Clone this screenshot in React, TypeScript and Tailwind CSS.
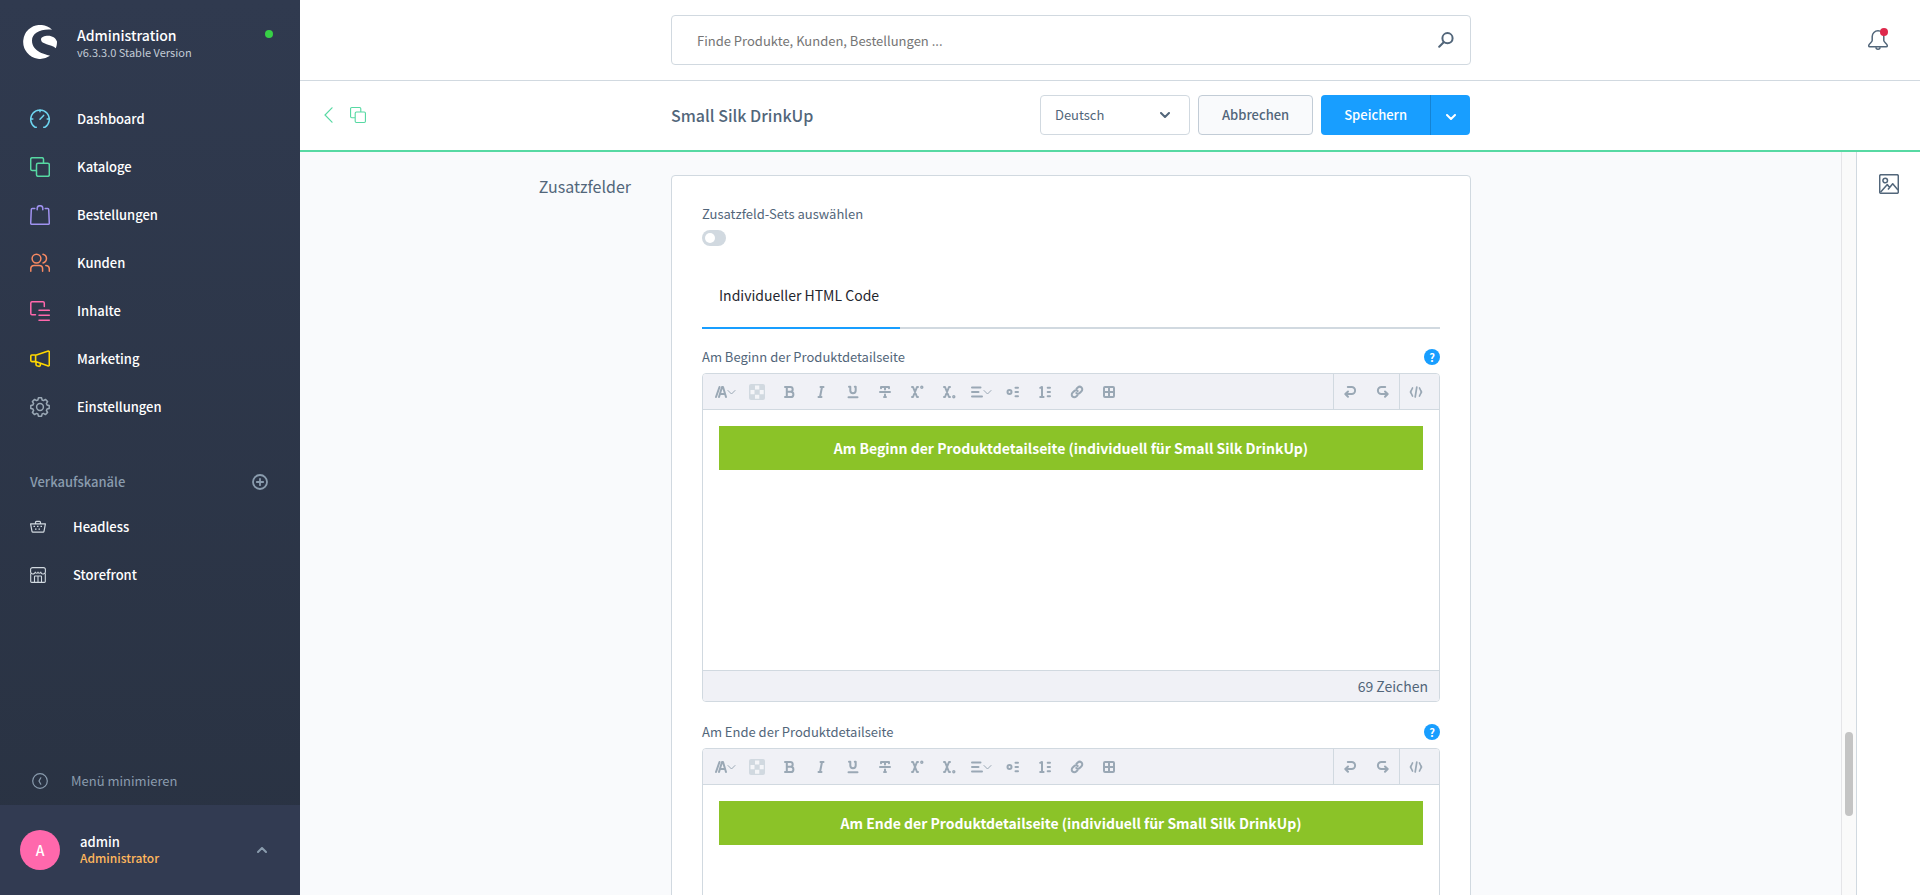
import { ReactNode, useState } from 'react';

const navItems = [
  { name: 'Dashboard', icon: <DashboardIcon /> },
  { name: 'Kataloge', icon: <CopyIcon className="size-5 text-[#57d9a3]" strokeWidth={1.5} /> },
  { name: 'Bestellungen', icon: <BagIcon /> },
  { name: 'Kunden', icon: <UsersIcon /> },
  { name: 'Inhalte', icon: <ContentIcon /> },
  { name: 'Marketing', icon: <MegaphoneIcon /> },
  { name: 'Einstellungen', icon: <GearIcon /> },
];

const channels = [
  { name: 'Headless', icon: <BasketIcon /> },
  { name: 'Storefront', icon: <StoreIcon /> },
];

const editors = [
  {
    id: 'start',
    label: 'Am Beginn der Produktdetailseite',
    text: 'Am Beginn der Produktdetailseite (individuell für Small Silk DrinkUp)',
  },
  {
    id: 'end',
    label: 'Am Ende der Produktdetailseite',
    text: 'Am Ende der Produktdetailseite (individuell für Small Silk DrinkUp)',
  },
];

function DashboardIcon() {
  return (
    <svg viewBox="0 0 20 20" className="size-5 text-[#6ed5f0]" fill="none" stroke="currentColor" strokeWidth="1.5" strokeLinecap="round">
      <path d="M6.3 18.3H5.2A9.3 9.3 0 1 1 14.8 18.3h-1.1M10 .8v2M.8 10h2M17.2 10h2M10 10.2l3.6-3.8" />
    </svg>
  );
}

function CopyIcon({ className, strokeWidth }: { className: string; strokeWidth: number }) {
  return (
    <svg viewBox="0 0 20 20" className={className} fill="none" stroke="currentColor" strokeWidth={strokeWidth}>
      <rect x="6.5" y="6.2" width="12.8" height="13.1" rx="1.5" />
      <path d="M6.2 13.5H2.2A1.5 1.5 0 0 1 .7 12V2.2A1.5 1.5 0 0 1 2.2.7H12a1.5 1.5 0 0 1 1.5 1.5v4" />
    </svg>
  );
}

function BagIcon() {
  return (
    <svg viewBox="0 0 20 20" className="size-5 text-[#a092f0]" fill="none" stroke="currentColor" strokeWidth="1.5" strokeLinecap="round" strokeLinejoin="round">
      <path d="M4.8 3.5H2.3a1 1 0 0 0-1 1L.7 18.1a1.1 1.1 0 0 0 1.1 1.2h16.4a1.1 1.1 0 0 0 1.1-1.2l-.6-13.6a1 1 0 0 0-1-1h-2.5M7.2 4.8V3.5a2.8 2.8 0 0 1 5.6 0v1.3" />
    </svg>
  );
}

function UsersIcon() {
  return (
    <svg viewBox="0 0 20 20" className="size-5 text-[#f88962]" fill="none" stroke="currentColor" strokeWidth="1.5" strokeLinecap="round">
      <circle cx="6.5" cy="5.6" r="4.4" />
      <path d="M.8 18.2v-2.4a3.3 3.3 0 0 1 3.3-3.3h5.2a3.3 3.3 0 0 1 3.3 3.3v2.4M13 1.3a4.4 4.4 0 0 1 0 8.6M15.8 12.6a3.6 3.6 0 0 1 3.5 3.6v2" />
    </svg>
  );
}

function ContentIcon() {
  return (
    <svg viewBox="0 0 20 20" className="size-5 text-[#ff68ac]" fill="none" stroke="currentColor" strokeWidth="1.5" strokeLinecap="round">
      <path d="M5.5 13.8H2A1.3 1.3 0 0 1 .8 12.5V2A1.3 1.3 0 0 1 2 .8h11A1.3 1.3 0 0 1 14.3 2v3.4M9 9.3h10.3M9 14.2h10.3M9 19.2h10.3" />
    </svg>
  );
}

function MegaphoneIcon() {
  return (
    <svg viewBox="0 0 20 20" className="size-5 text-[#ffd700]" fill="none" stroke="currentColor" strokeWidth="1.6" strokeLinejoin="round">
      <path d="M5.6 6.2 18.3 2.1a.8.8 0 0 1 1 .8v13.2a.8.8 0 0 1-1 .8L5.6 12.6M5.6 6H1.8a1 1 0 0 0-1 1v4.6a1 1 0 0 0 1 1h3.8V6M6 13v2.6a1.3 1.3 0 0 0 .9 1.2l1.8.5a1.3 1.3 0 0 0 1.6-1v-1.7" />
    </svg>
  );
}

function GearIcon() {
  return (
    <svg viewBox="0 0 20 20" className="size-5 text-[#9aa8b5]" fill="none" stroke="currentColor" strokeWidth="1.5" strokeLinejoin="round">
      <circle cx="10" cy="10" r="3.4" />
      <path d="M8.4.8h3.2l.5 2.2 1.4.6 1.9-1.2 2.2 2.2-1.2 1.9.6 1.4 2.2.5v3.2l-2.2.5-.6 1.4 1.2 1.9-2.2 2.2-1.9-1.2-1.4.6-.5 2.2H8.4L7.9 17l-1.4-.6-1.9 1.2-2.2-2.2 1.2-1.9L3 12.1l-2.2-.5V8.4L3 7.9l.6-1.4-1.2-1.9 2.2-2.2 1.9 1.2L7.9 3z" />
    </svg>
  );
}

function BasketIcon() {
  return (
    <svg viewBox="0 0 16 16" className="size-4 text-[#d1d9e0]" fill="none" stroke="currentColor" strokeWidth="1.2" strokeLinejoin="round">
      <path d="M.6 4.8h14.8L14 12.3a1 1 0 0 1-1 .8H3a1 1 0 0 1-1-.8zM5.5 4.6V3.4a1 1 0 0 1 1-1h3a1 1 0 0 1 1 1v1.2" />
      <path d="M3.5 7.4h9M5 10.1h6" strokeDasharray="1.5 2" />
    </svg>
  );
}

function StoreIcon() {
  return (
    <svg viewBox="0 0 16 16" className="size-4 text-[#d1d9e0]" fill="none" stroke="currentColor" strokeWidth="1.1" strokeLinejoin="round">
      <path d="M.6 4.4V2.600a2 2 0 0 1 2-2h10.8a2 2 0 0 1 2 2v1.8M.6 4.400a2.200 2.200 0 0 0 4.600.6c.2 1.700 2.700 1.700 2.800 0 .1 1.700 2.600 1.700 2.800 0a2.200 2.200 0 0 0 4.600-.6" />
      <path d="M.7 6.500v8a.9.9 0 0 0 .9.900h12.800a.9.9 0 0 0 .9-.900v-8M4.500 15.400V9.600a.6.6 0 0 1 .6-.6h5.800a.6.6 0 0 1 .6.6v5.800M8 9v6.400" />
    </svg>
  );
}

function Chevron({ className }: { className: string }) {
  return (
    <svg viewBox="0 0 10 6" className={className} fill="none" stroke="currentColor" strokeWidth="2" strokeLinecap="round" strokeLinejoin="round">
      <path d="M1 1l4 4 4-4" />
    </svg>
  );
}

function ToolIcon({ children }: { children: ReactNode }) {
  return (
    <svg viewBox="0 0 16 16" className="size-4" fill="none" stroke="currentColor" strokeWidth="2" strokeLinecap="round" strokeLinejoin="round">
      {children}
    </svg>
  );
}

// icon with a thin chevron behind it, for the tools that open a menu
function MenuToolIcon({ children }: { children: ReactNode }) {
  return (
    <svg viewBox="0 0 22 16" className="h-4 w-[22px]" fill="none" stroke="currentColor" strokeWidth="2" strokeLinecap="round" strokeLinejoin="round">
      {children}
      <path d="M14 6.5l3.5 3.5L21 6.5" strokeWidth="1" />
    </svg>
  );
}

const tools = [
  { name: 'Format', icon: <MenuToolIcon><path d="M2 13L5.500 3M5 13L8 3h1l3 10M6.500 10h4" /></MenuToolIcon> },
  {
    name: 'Textfarbe',
    icon: (
      <svg viewBox="0 0 16 16" className="size-4 text-[#d1d9e0]" fill="currentColor">
        <rect width="16" height="16" rx="2" />
        <path d="M6 1.500h4.300v4H6zM1.500 6h4v4.300h-4zM10.700 6h4v4.300h-4zM6 10.700h4.300v4H6z" fill="#f4f5f8" />
      </svg>
    ),
  },
  { name: 'Fett', icon: <ToolIcon><path d="M4 3h5.300a2.400 2.400 0 0 1 0 4.800H5.800M4 13h5.800a2.600 2.600 0 0 0 0-5.200M5.800 3v10" /></ToolIcon> },
  { name: 'Kursiv', icon: <ToolIcon><path d="M7.500 3h3M5.500 13h3M9 3L7 13" /></ToolIcon> },
  { name: 'Unterstrichen', icon: <ToolIcon><path d="M4 2.800h1.300v3.700a2.700 2.700 0 0 0 5.400 0V2.800H9.800M3.500 13.200h9" /></ToolIcon> },
  { name: 'Durchgestrichen', icon: <ToolIcon><path d="M4 4.200V3h8v1.200M8 3v2.500M3 8h10M8 10.500V13M7 13h2" /></ToolIcon> },
  { name: 'Hochgestellt', icon: <ToolIcon><path d="M3 3h1l4 10h1M9 3H8L4 13H3" /><circle cx="12.800" cy="3.300" r=".7" /></ToolIcon> },
  { name: 'Tiefgestellt', icon: <ToolIcon><path d="M3 3h1l4 10h1M9 3H8L4 13H3" /><circle cx="12.800" cy="12.700" r=".7" /></ToolIcon> },
  { name: 'Ausrichtung', icon: <MenuToolIcon><path d="M2 3.500h8.500M2 8h6.500M2 12.500h10" /></MenuToolIcon> },
  { name: 'Liste', icon: <ToolIcon><circle cx="4.500" cy="8" r="2" /><path d="M10.500 3.800H13M10.500 8H13M10.500 12.200H13" /></ToolIcon> },
  { name: 'Nummerierte Liste', icon: <ToolIcon><path d="M3.200 3.800L5 3v10M3.200 13h3.400M10.700 3.800H13M10.700 8H13M10.700 12.200H13" /></ToolIcon> },
  { name: 'Link', icon: <ToolIcon><path d="M7.500 4.800l1.300-1.300a2.600 2.600 0 0 1 3.700 3.700l-1.800 1.800a2.400 2.400 0 0 1-3.400 0M8.500 11.200l-1.300 1.300a2.600 2.600 0 0 1-3.700-3.700L5.300 7a2.400 2.400 0 0 1 3.400 0" /></ToolIcon> },
  { name: 'Tabelle', icon: <ToolIcon><rect x="3" y="3" width="10" height="10" rx="1" /><path d="M8 3v10M3 8h10" /></ToolIcon> },
];

function ToolButton({ name, children }: { name: string; children: ReactNode }) {
  return (
    <button type="button" aria-label={name} className="flex w-8 items-center justify-center">
      {children}
    </button>
  );
}

function Editor({ id, label, text }: { id: string; label: string; text: string }) {
  return (
    <div className="mb-[18px]">
      <div className="flex h-6 items-center justify-between">
        <span id={`label-${id}`} className="text-[13px]">{label}</span>
        <button type="button" aria-label="Hilfe" className="size-4 rounded-full bg-[#189eff] text-[11px] leading-4 font-bold text-white">
          ?
        </button>
      </div>
      <div className="mt-1 overflow-hidden rounded-sm border border-[#d1d9e0]">
        <div className="flex h-9 border-b border-[#d1d9e0] bg-[#f0f1f6] pl-1.5 text-[#9aa8b5]">
          <div className="flex flex-1">
            {tools.map((tool) => (
              <ToolButton key={tool.name} name={tool.name}>{tool.icon}</ToolButton>
            ))}
          </div>
          <div className="flex gap-px border-l border-[#d1d9e0]">
            <ToolButton name="Rückgängig">
              <ToolIcon><path d="M5.800 3h3.800a3.500 3.500 0 0 1 0 7H4M6 7.500L3.300 10 6 12.800" /></ToolIcon>
            </ToolButton>
            <ToolButton name="Wiederholen">
              <ToolIcon><path d="M10.200 3H6.400a3.500 3.500 0 0 0 0 7H12M10 7.500l2.700 2.500L10 12.800" /></ToolIcon>
            </ToolButton>
          </div>
          <div className="flex border-l border-[#d1d9e0] pr-[7px]">
            <ToolButton name="Code">
              <ToolIcon><path d="M4.500 4L3.300 6.500 2.500 8l.8 1.500L4.500 12M11.500 4l1.200 2.500.8 1.500-.8 1.500-1.200 2.500M8.800 3L7.200 13" strokeWidth="1.700" /></ToolIcon>
            </ToolButton>
          </div>
        </div>
        <div role="textbox" aria-labelledby={`label-${id}`} className="h-[260px] bg-white p-4">
          <p className="bg-[#8bc328] text-center text-sm leading-[44px] font-bold text-white">{text}</p>
        </div>
        <div className="h-[31px] border-t border-[#d1d9e0] bg-[#f0f1f6] pr-[11px] text-right text-sm leading-[30px]">
          {text.length} Zeichen
        </div>
      </div>
    </div>
  );
}

function Sidebar() {
  return (
    <aside className="flex w-[300px] shrink-0 flex-col bg-linear-to-b from-[#303a4f] to-[#293242] text-[13px] font-medium text-white">
      <div className="flex items-start px-[23px] pt-[25px]">
        <svg viewBox="0 0 34 34" className="size-[34px] shrink-0" fill="#fff">
          <path d="M29 4.7A17 17 0 1 0 27 30.800C24 29.500 9 27.500 9 15.500 9 8 18 3.500 29 4.700z" />
          <path d="M34 16.500c0 2.500-.3 4.600-1.200 6.700C28 19 18 19.500 18 14.500c0-2.500 3.500-3.700 7-3.700 4.500 0 7.500 2.200 9 5.700z" />
        </svg>
        <div className="ml-5 flex-1">
          <div className="text-sm leading-5">Administration</div>
          <div className="text-[11px] leading-[14px] font-normal text-[#c3ccd6]">v6.3.3.0 Stable Version</div>
        </div>
        <span className="mt-[5px] mr-1 size-2 rounded-full bg-[#37d046]" />
      </div>

      <nav className="mt-9">
        {navItems.map((item) => (
          <a key={item.name} href="#" className="flex h-12 items-center gap-[27px] pl-[30px]">
            {item.icon}
            <span>{item.name}</span>
          </a>
        ))}
      </nav>

      <div className="mt-[39px] flex h-6 items-center justify-between pr-8 pl-[30px] text-[#8a9cae]">
        <span>Verkaufskanäle</span>
        <button type="button" aria-label="Verkaufskanal hinzufügen">
          <svg viewBox="0 0 16 16" className="size-4" fill="none" stroke="currentColor" strokeWidth="1.800" strokeLinecap="round">
            <circle cx="8" cy="8" r="7" />
            <path d="M8 4.800v6.400M4.800 8h6.400" />
          </svg>
        </button>
      </div>
      <nav className="mt-[9px]">
        {channels.map((item) => (
          <a key={item.name} href="#" className="flex h-12 items-center gap-[27px] pl-[30px]">
            {item.icon}
            <span>{item.name}</span>
          </a>
        ))}
      </nav>

      <button type="button" className="mt-auto flex h-12 items-center gap-[23px] pl-8 font-normal text-[#8a9cae]">
        <svg viewBox="0 0 16 16" className="size-4" fill="none" stroke="currentColor" strokeWidth="1.200" strokeLinecap="round">
          <circle cx="8" cy="8" r="7.300" />
          <path d="M8.800 4.800L7 8l1.800 3.200" />
        </svg>
        Menü minimieren
      </button>
      <div className="flex h-[90px] items-center bg-[#323b52] pr-[33px] pl-5">
        <div className="flex size-10 items-center justify-center rounded-full bg-[#ff68ac] text-sm">A</div>
        <div className="ml-5 flex-1 pb-0.5">
          <div className="leading-[17px]">admin</div>
          <div className="text-xs leading-4 text-[#ffb75d]">Administrator</div>
        </div>
        <button type="button" aria-label="Benutzermenü">
          <Chevron className="w-2.5 rotate-180 text-[#8a9cae]" />
        </button>
      </div>
    </aside>
  );
}

export default function App() {
  const [showSets, setShowSets] = useState(false);

  return (
    <div className="flex h-screen overflow-hidden bg-[#f9fafc] font-['Noto_Sans_CJK_SC','Open_Sans',sans-serif] text-[#52667a]">
      <Sidebar />

      <div className="flex min-w-0 flex-1 flex-col">
        <header className="flex h-[81px] shrink-0 items-center border-b border-[#d1d9e0] bg-white">
          <div className="grid flex-1 grid-cols-[1fr_minmax(0,800px)_1fr]">
            <div className="relative col-start-2">
              <input
                type="text"
                aria-label="Suche"
                placeholder="Finde Produkte, Kunden, Bestellungen ..."
                className="h-[50px] w-full rounded-sm border border-[#d1d9e0] pr-12 pl-[25px] text-[13px] placeholder:text-[#757575]"
              />
              <svg viewBox="0 0 16 16" className="absolute top-[17px] right-[17px] size-4" fill="none" stroke="currentColor" strokeWidth="2" strokeLinecap="round">
                <circle cx="9.500" cy="6.200" r="5.100" />
                <path d="M5.700 10.200L1.200 14.800" />
              </svg>
            </div>
          </div>
          <div className="w-[78px] pl-[26px]">
            <button type="button" aria-label="Benachrichtigungen" className="relative block">
              <svg viewBox="0 0 20 20" className="size-5" fill="none" stroke="currentColor" strokeWidth="1.500" strokeLinejoin="round">
                <path d="M4.200 6.500A5.800 5.800 0 0 1 10 .8a5.800 5.800 0 0 1 5.800 5.700v4c0 1.800 3.500 3.300 3.500 5.300a1 1 0 0 1-1 1H1.700a1 1 0 0 1-1-1c0-2 3.500-3.500 3.500-5.300z" />
                <path d="M8 17.200a2 2 0 0 0 4 0" />
              </svg>
              <span className="absolute -top-0.5 right-0 size-2 rounded-full bg-[#de294c]" />
            </button>
          </div>
        </header>

        <div className="flex h-[71px] shrink-0 items-start border-b-2 border-[#57d9a3] bg-white pt-3.5">
          <div className="grid flex-1 grid-cols-[1fr_minmax(0,800px)_1fr] items-center">
            <div className="flex items-center gap-[17px] pl-6 text-[#57d9a3]">
              <a href="#" aria-label="Zurück">
                <svg viewBox="0 0 9 16" className="h-4 w-[9px]" fill="none" stroke="currentColor" strokeWidth="1.200" strokeLinecap="round">
                  <path d="M8 .8L1 8l7 7.200" />
                </svg>
              </a>
              <CopyIcon className="size-4" strokeWidth={1.4} />
            </div>
            <div className="flex items-center gap-2 pr-px">
              <h1 className="flex-1 text-base font-medium">Small Silk DrinkUp</h1>
              <div className="relative">
                <select aria-label="Sprache" className="h-10 w-[150px] appearance-none rounded-sm border border-[#d1d9e0] bg-white px-3.5 text-[13px]">
                  <option>Deutsch</option>
                </select>
                <Chevron className="pointer-events-none absolute top-[17px] right-5 w-2.5" />
              </div>
              <button type="button" className="h-10 rounded-sm border border-[#c2ccd6] bg-[#f9fafc] px-[23px] text-[13px] font-medium">
                Abbrechen
              </button>
              <div className="flex overflow-hidden rounded-sm bg-[#189eff] text-[13px] font-medium text-white">
                <button type="button" className="h-10 px-[23px]">Speichern</button>
                <button type="button" aria-label="Weitere Optionen" className="flex h-10 w-10 items-center justify-center border-l border-[#1583d3] pt-1">
                  <Chevron className="w-2.5" />
                </button>
              </div>
            </div>
          </div>
          <div className="w-[78px]" />
        </div>

        <div className="flex min-h-0 flex-1">
          <main className="grid flex-1 grid-cols-[1fr_minmax(0,800px)_1fr] overflow-y-auto pt-[23px] [scrollbar-width:none]">
            <h2 className="pr-10 text-right text-base leading-[22px]">Zusatzfelder</h2>
            <section className="rounded-sm border border-[#d1d9e0] bg-white p-[30px] pt-7">
              <label htmlFor="sets" className="block text-[13px] leading-5">Zusatzfeld-Sets auswählen</label>
              <input
                id="sets"
                type="checkbox"
                role="switch"
                checked={showSets}
                onChange={(e) => setShowSets(e.target.checked)}
                className="mt-1.5 block h-4 w-6 appearance-none rounded-full bg-[#d1d9e0] before:m-[3px] before:block before:size-2.5 before:rounded-full before:bg-white checked:bg-[#189eff] checked:before:ml-[11px]"
              />

              <div role="tablist" className="mt-[17px] mb-4 flex border-b-2 border-[#d1d9e0]">
                <button type="button" role="tab" aria-selected="true" className="-mb-0.5 h-[66px] border-b-2 border-[#189eff] pr-[21px] pl-[17px] text-sm text-[#1f262e]">
                  Individueller HTML Code
                </button>
              </div>

              {editors.map((editor) => (
                <Editor key={editor.id} {...editor} />
              ))}
            </section>
          </main>

          <div className="flex w-3.5 flex-col items-center bg-[#fafafa] shadow-[-1px_0_0_#e5e5e8]">
            <div className="flex-[580]" />
            <div className="w-2 flex-[84] rounded-full bg-[#c4c4c4]" />
            <div className="flex-[79]" />
          </div>

          <aside className="w-16 border-l border-[#d1d9e0] bg-white pt-[22px] pl-[22px]">
            <button type="button" aria-label="Medien" className="block">
              <svg viewBox="0 0 20 20" className="size-5" fill="none" stroke="currentColor" strokeWidth="1.500" strokeLinejoin="round">
                <rect x=".7" y=".7" width="18.600" height="18.600" rx="1.300" />
                <circle cx="6.200" cy="6.500" r="2.300" />
                <path d="M1.500 18.300L8.300 10.500l2.600 3.500M9 15.500l4.700-5.800 5.300 6.300" />
              </svg>
            </button>
          </aside>
        </div>
      </div>
    </div>
  );
}
